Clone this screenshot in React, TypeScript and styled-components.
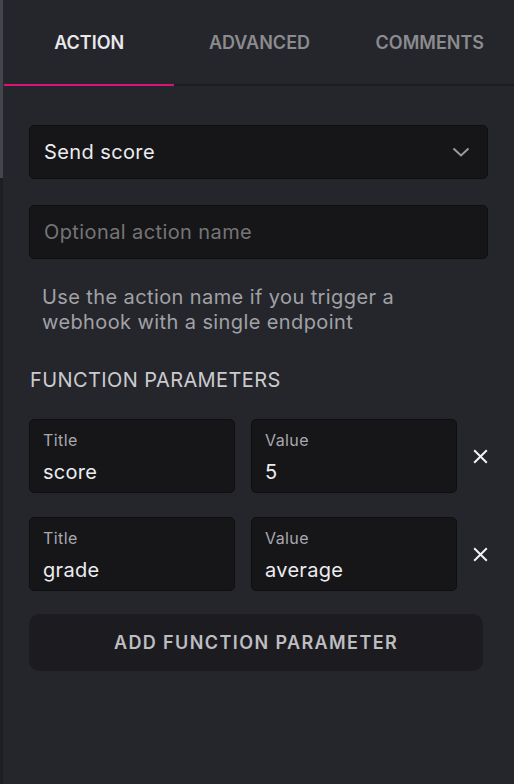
import styled, { createGlobalStyle } from "styled-components";

const GlobalStyle = createGlobalStyle`
  html, body {
    margin: 0;
    padding: 0;
    background: #25262b;
    font-family: Inter, "Noto Sans", sans-serif;
    -webkit-font-smoothing: antialiased;
  }
  * {
    box-sizing: border-box;
  }
`;

const tabs = ["ACTION", "ADVANCED", "COMMENTS"];

const params = [
  { title: "score", value: "5" },
  { title: "grade", value: "average" },
];

export default function App() {
  return (
    <>
      <GlobalStyle />
      <Page>
        <Rail>
          <Thumb />
        </Rail>
        <Panel>
          <Tabs>
            {tabs.map((tab, i) => (
              <Tab key={tab} active={i === 0}>
                {tab}
              </Tab>
            ))}
          </Tabs>
          <Body>
            <Select>
              <span>Send score</span>
              <svg width="18" height="10" viewBox="0 0 18 10" fill="none">
                <path d="M1.5 1.5L9 8.5L16.5 1.5" stroke="#9a9aa0" strokeWidth="2" />
              </svg>
            </Select>
            <TextInput placeholder="Optional action name" />
            <Hint>
              Use the action name if you trigger a
              <br />
              webhook with a single endpoint
            </Hint>
            <SectionTitle>FUNCTION PARAMETERS</SectionTitle>
            <ParamList>
              {params.map((p) => (
                <ParamRow key={p.title}>
                  <Field>
                    <FieldLabel>Title</FieldLabel>
                    <FieldValue>{p.title}</FieldValue>
                  </Field>
                  <Field>
                    <FieldLabel>Value</FieldLabel>
                    <FieldValue>{p.value}</FieldValue>
                  </Field>
                  <RemoveButton>
                    <svg width="15" height="15" viewBox="0 0 15 15" fill="none">
                      <path d="M1.2 1.2L13.8 13.8M13.8 1.2L1.2 13.8" stroke="#f2f2f4" strokeWidth="2" />
                    </svg>
                  </RemoveButton>
                </ParamRow>
              ))}
            </ParamList>
            <AddButton>ADD FUNCTION PARAMETER</AddButton>
          </Body>
        </Panel>
      </Page>
    </>
  );
}

const Page = styled.div`
  display: flex;
  width: 514px;
  height: 784px;
  overflow: hidden;
`;

const Rail = styled.div`
  width: 3px;
  flex-shrink: 0;
  background: #1e1f23;
`;

const Thumb = styled.div`
  height: 178px;
  background: #44464e;
`;

const Panel = styled.div`
  flex: 1;
  padding-left: 1px;
`;

const Tabs = styled.div`
  display: grid;
  grid-template-columns: repeat(3, 1fr);
  border-bottom: 2px solid #1c1d21;
`;

const Tab = styled.div<{ active?: boolean }>`
  display: flex;
  align-items: center;
  justify-content: center;
  height: 86px;
  padding-top: 1px;
  margin-bottom: -2px;
  font-size: 18px;
  font-weight: 600;
  color: ${(p) => (p.active ? "#e9e9ec" : "#8b8b90")};
  border-bottom: 2px solid ${(p) => (p.active ? "#d6147a" : "transparent")};
`;

const Body = styled.div`
  padding: 39px 27px 0 25px;
`;

const Select = styled.div`
  display: flex;
  align-items: center;
  justify-content: space-between;
  height: 54px;
  padding: 0 17px 0 14px;
  background: #161619;
  border: 1px solid #0f0f11;
  border-radius: 5px;
  font-size: 20px;
  letter-spacing: 0.4px;
  color: #ececef;
`;

const TextInput = styled.input`
  display: block;
  width: 100%;
  height: 54px;
  margin-top: 26px;
  padding: 0 14px;
  background: #161619;
  border: 1px solid #0f0f11;
  border-radius: 5px;
  font-family: inherit;
  font-size: 20px;
  letter-spacing: 0.4px;
  color: #ececef;
  outline: none;

  ::placeholder {
    color: #85858b;
  }
`;

const Hint = styled.p`
  margin: 26px 0 0 13px;
  font-size: 20px;
  line-height: 25px;
  letter-spacing: 0.4px;
  color: #a1a1a6;
`;

const SectionTitle = styled.div`
  margin-top: 33px;
  margin-left: 1px;
  font-size: 20px;
  letter-spacing: 0.4px;
  color: #cbcbcf;
`;

const ParamList = styled.div`
  display: flex;
  flex-direction: column;
  gap: 24px;
  margin-top: 27px;
`;

const ParamRow = styled.div`
  display: grid;
  grid-template-columns: 206px 206px 1fr;
  column-gap: 16px;
  align-items: center;
`;

const Field = styled.div`
  height: 74px;
  padding: 10px 13px 0;
  background: #161619;
  border: 1px solid #0f0f11;
  border-radius: 5px;
`;

const FieldLabel = styled.div`
  font-size: 16px;
  line-height: 20px;
  letter-spacing: 0.4px;
  color: #a8a8ad;
`;

const FieldValue = styled.div`
  margin-top: 10px;
  font-size: 20px;
  line-height: 24px;
  letter-spacing: 0.3px;
  color: #ececef;
`;

const RemoveButton = styled.div`
  display: flex;
  justify-content: flex-end;
`;

const AddButton = styled.div`
  display: flex;
  align-items: center;
  justify-content: center;
  height: 57px;
  margin: 23px 5px 0 0;
  background: #1c1c20;
  border-radius: 10px;
  font-size: 18px;
  font-weight: 600;
  letter-spacing: 1.4px;
  color: #bebec2;
`;
